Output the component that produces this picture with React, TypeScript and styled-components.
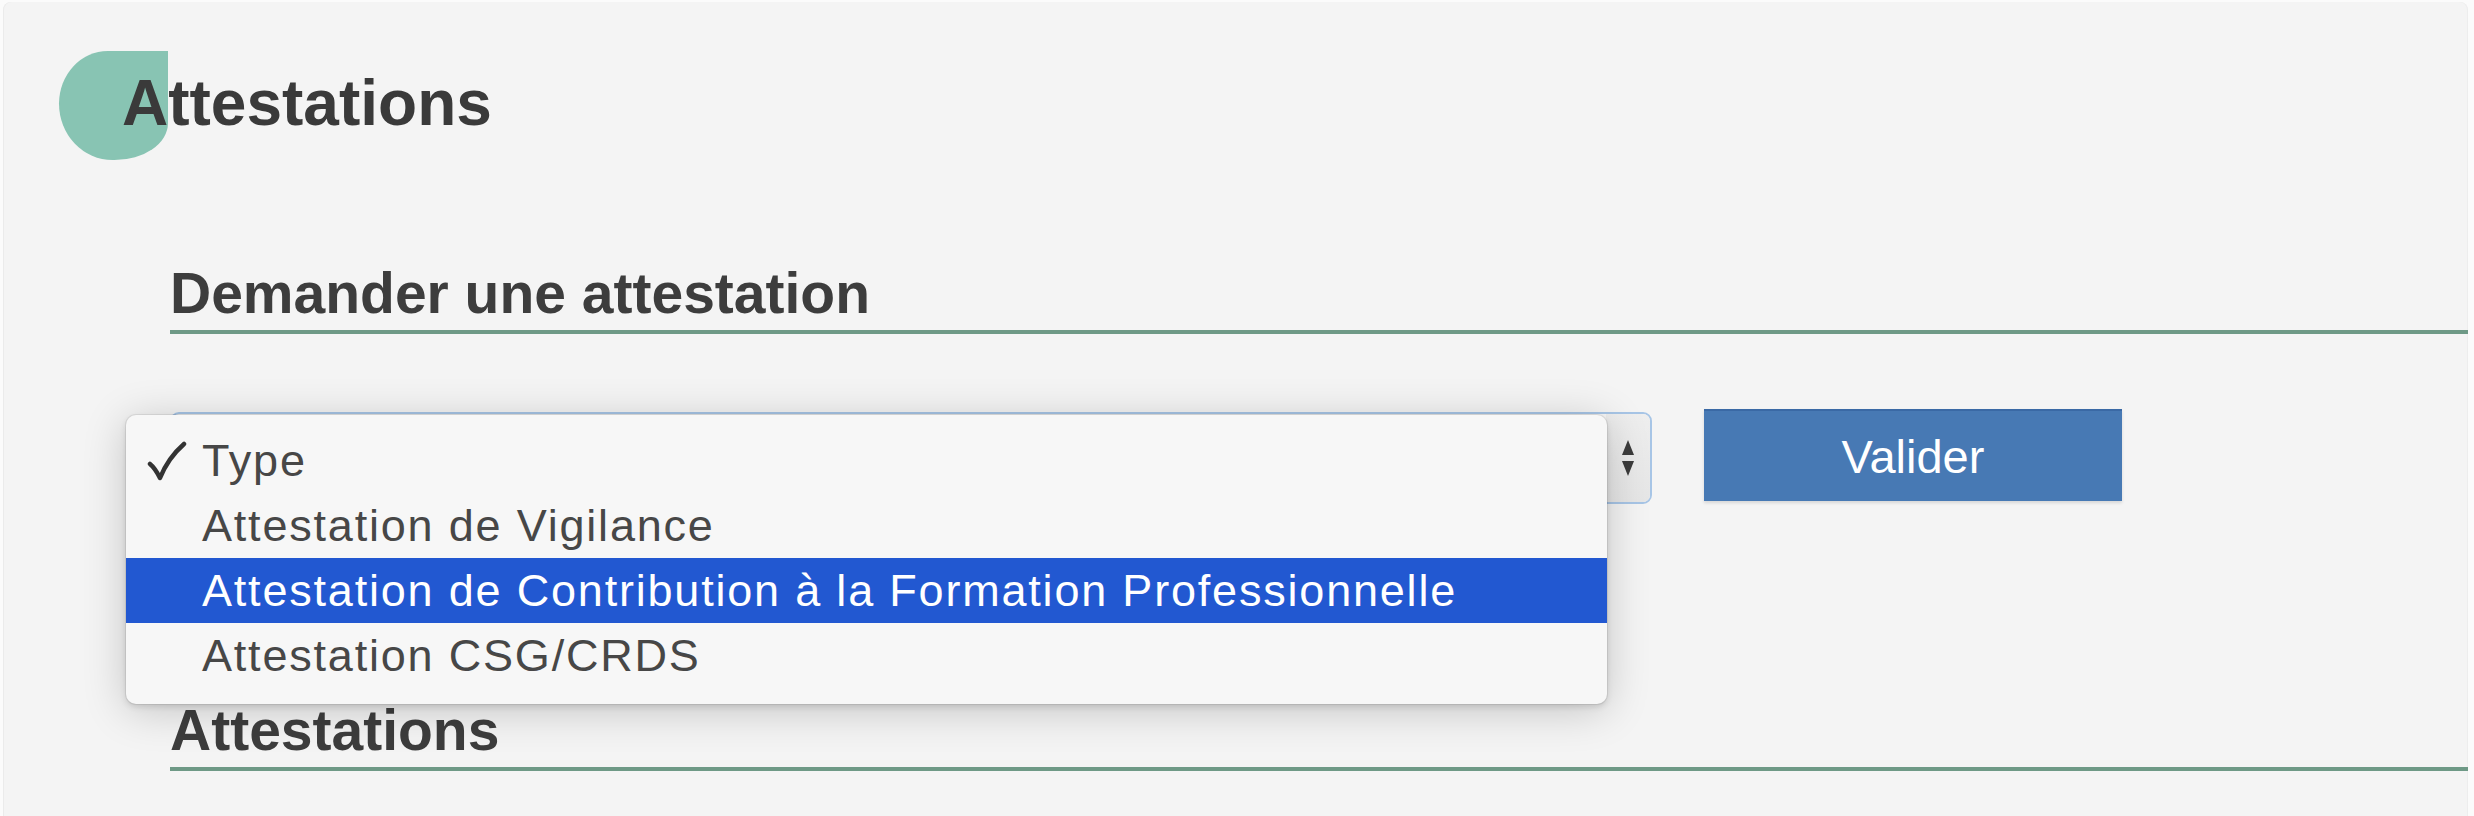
import React from "react";
import styled, { createGlobalStyle } from "styled-components";

const Global = createGlobalStyle`
  html, body { margin: 0; padding: 0; }
  body {
    background: #fbfbfb;
    font-family: "Liberation Sans", Arial, sans-serif;
    overflow: hidden;
  }
`;

const Panel = styled.div`
  margin: 2px 6px 0 3px;
  height: 814px;
  background: #f4f4f4;
  border-radius: 8px 8px 0 0;
  box-shadow: inset 1px 0 0 #ebebeb, inset -1px 0 0 #ededed;
  padding-top: 49px;
  box-sizing: border-box;
`;

const TitleRow = styled.div`
  display: flex;
  align-items: flex-start;
  padding-left: 56px;
`;

const Blob = styled.div`
  flex: none;
  width: 109px;
  height: 109px;
  background: #88c4b3;
  border-radius: 50px 0 55px 55px / 54px 0 38px 58px;
`;

const Title = styled.h1`
  margin: 0 0 0 -46px;
  font: 700 64px/104px "Liberation Sans", Arial, sans-serif;
  color: #3a3a3a;
`;

const Content = styled.div`
  padding-left: 167px;
`;

const SectionHeading = styled.h2<{ $top: number }>`
  margin: ${(p) => p.$top}px 0 0;
  font: 700 57px/66px "Liberation Sans", Arial, sans-serif;
  color: #3d3d3d;
  padding-bottom: 4px;
  border-bottom: 4px solid #6e9986;
`;

const FormRow = styled.div`
  position: relative;
  display: flex;
  align-items: flex-start;
  gap: 52px;
  margin-top: 75px;
`;

const SelectBox = styled.div`
  width: 1482px;
  height: 92px;
  margin-top: 3px;
  box-sizing: border-box;
  border: 2px solid #a7c5e6;
  border-radius: 9px;
  background: #f7f7f7;
  display: flex;
  justify-content: flex-end;
  overflow: hidden;
`;

const ArrowZone = styled.div`
  width: 44px;
  height: 100%;
  background: linear-gradient(#eeeeee, #e6e6e6);
  display: flex;
  align-items: center;
  justify-content: center;
`;

const Button = styled.button`
  width: 418px;
  height: 92px;
  padding: 0;
  border: none;
  border-top: 2px solid #3a69a5;
  background: #4779b4;
  color: #ffffff;
  font: 400 47px "Liberation Sans", Arial, sans-serif;
  box-shadow: 0 2px 3px rgba(0, 0, 0, 0.12);
`;

const Menu = styled.ul`
  position: absolute;
  left: -44px;
  top: 6px;
  width: 1481px;
  margin: 0;
  padding: 13px 0 16px;
  list-style: none;
  background: #f7f7f7;
  border-radius: 10px;
  box-shadow: 0 0 0 1px rgba(0, 0, 0, 0.07), 0 6px 44px rgba(0, 0, 0, 0.2),
    0 3px 6px rgba(0, 0, 0, 0.12);
  z-index: 2;
`;

const Option = styled.li<{ $active?: boolean }>`
  height: 65px;
  display: flex;
  align-items: center;
  padding-left: 21px;
  background: ${(p) => (p.$active ? "#2258d1" : "transparent")};
  color: ${(p) => (p.$active ? "#ffffff" : "#474747")};
  font: 400 45px "Liberation Sans", Arial, sans-serif;
  letter-spacing: 1.8px;
  white-space: nowrap;
`;

const CheckSlot = styled.span`
  flex: none;
  width: 55px;
  display: flex;
  align-items: center;
`;

const options = [
  { label: "Type", checked: true },
  { label: "Attestation de Vigilance" },
  { label: "Attestation de Contribution à la Formation Professionnelle", active: true },
  { label: "Attestation CSG/CRDS" },
];

export default function App() {
  return (
    <>
      <Global />
      <Panel>
        <TitleRow>
          <Blob />
          <Title>Attestations</Title>
        </TitleRow>
        <Content>
          <SectionHeading $top={100}>Demander une attestation</SectionHeading>
          <FormRow>
            <SelectBox>
              <ArrowZone>
                <svg width="16" height="40" viewBox="0 0 16 40">
                  <path d="M8 2 L14 17 L2 17 Z" fill="#3c3c3c" />
                  <path d="M2 23 L14 23 L8 38 Z" fill="#3c3c3c" />
                </svg>
              </ArrowZone>
            </SelectBox>
            <Button>Valider</Button>
            <Menu>
              {options.map((o) => (
                <Option key={o.label} $active={o.active}>
                  <CheckSlot>
                    {o.checked && (
                      <svg width="40" height="40" viewBox="0 0 40 40">
                        <path
                          d="M3 23 Q8 27 13 37 Q21 17 37 3"
                          fill="none"
                          stroke="#333"
                          strokeWidth="4.5"
                          strokeLinecap="round"
                          strokeLinejoin="round"
                        />
                      </svg>
                    )}
                  </CheckSlot>
                  {o.label}
                </Option>
              ))}
            </Menu>
          </FormRow>
          <SectionHeading $top={193}>Attestations</SectionHeading>
        </Content>
      </Panel>
    </>
  );
}
